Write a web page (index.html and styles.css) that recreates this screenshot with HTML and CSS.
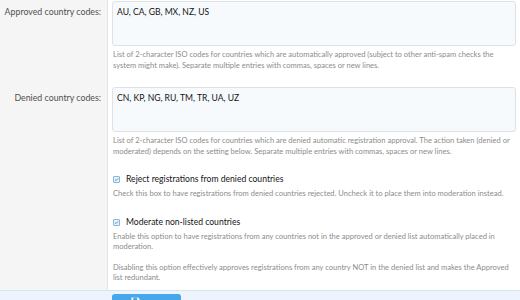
FILE: index.html
```html
<!DOCTYPE html>
<html lang="en">
<head>
  <meta charset="UTF-8" />
  <title>Registration options</title>
  <link rel="stylesheet" href="styles.css">
</head>
<body>

<form class="block">
  <dl class="form-row">
    <dt class="row-label">Approved country codes:</dt>
    <dd class="row-input">
      <textarea class="input-area" rows="3">AU, CA, GB, MX, NZ, US</textarea>
      <p class="explain">List of 2-character ISO codes for countries which are automatically approved (subject to other anti-spam checks the<br>system might make). Separate multiple entries with commas, spaces or new lines.</p>
    </dd>
  </dl>

  <dl class="form-row">
    <dt class="row-label">Denied country codes:</dt>
    <dd class="row-input">
      <textarea class="input-area" rows="3">CN, KP, NG, RU, TM, TR, UA, UZ</textarea>
      <p class="explain">List of 2-character ISO codes for countries which are denied automatic registration approval. The action taken (denied or<br>moderated) depends on the setting below. Separate multiple entries with commas, spaces or new lines.</p>
    </dd>
  </dl>

  <dl class="form-row">
    <dt class="row-label"></dt>
    <dd class="row-input checks">
      <label class="check">
        <span class="box">
          <svg width="7" height="7" viewBox="0 0 7 7"><path d="M1.3 3.6 L2.9 5.1 L5.8 1.9" fill="none" stroke="#2577b1" stroke-width="1"/></svg>
        </span>
        Reject registrations from denied countries
      </label>
      <p class="explain explain-check">Check this box to have registrations from denied countries rejected. Uncheck it to place them into moderation instead.</p>

      <label class="check check-gap">
        <span class="box">
          <svg width="7" height="7" viewBox="0 0 7 7"><path d="M1.3 3.6 L2.9 5.1 L5.8 1.9" fill="none" stroke="#2577b1" stroke-width="1"/></svg>
        </span>
        Moderate non-listed countries
      </label>
      <p class="explain explain-check">Enable this option to have registrations from any countries not in the approved or denied list automatically placed in<br>moderation.</p>
      <p class="explain explain-gap">Disabling this option effectively approves registrations from any country NOT in the denied list and makes the Approved<br>list redundant.</p>
    </dd>
  </dl>

  <div class="submit-row">
    <div class="submit-spacer"></div>
    <button type="submit" class="button">
      <svg width="9" height="10" viewBox="0 0 9 10"><path d="M0.5 0.5 H7 L8.5 2 V9.5 H0.5 Z" fill="#ffffff"/><rect x="2.2" y="0.5" width="4" height="2.5" fill="#47a7eb"/></svg>
      <span class="button-text">Save</span>
    </button>
  </div>
</form>

</body>
</html>
```

FILE: styles.css
```css
body {
  margin: 0;
  padding: 0;
  font-family: 'Lato', 'Open Sans', sans-serif;
  background: #ffffff;
  color: #141414;
  overflow: hidden;
}

.block {
  width: 520px;
}

.form-row {
  display: flex;
  margin: 0;
}

.row-label {
  width: 101px;
  flex-shrink: 0;
  padding: 5px 6px 0 0;
  background: #f5f5f5;
  border-right: 1px solid #e4e4e4;
  text-align: right;
  white-space: nowrap;
  font-size: 8.8px;
  line-height: 14px;
  color: #505050;
}

.row-input {
  flex: 1;
  margin: 0;
  padding: 1px 4px 15px 4px;
}

.input-area {
  display: block;
  box-sizing: border-box;
  width: 100%;
  height: 45px;
  padding: 3px 4px;
  font-family: inherit;
  font-size: 8.6px;
  line-height: 14px;
  color: #141414;
  background: #f7fafd;
  border: 1px solid #dfe2e5;
  border-radius: 3px;
  resize: none;
}

.explain {
  margin: 4px -8px 0 1px;
  font-size: 7.55px;
  line-height: 10.5px;
  color: #8c8c8c;
}

.checks {
  padding-top: 0;
  padding-bottom: 6px;
}

.check {
  display: flex;
  align-items: center;
  gap: 6px;
  font-size: 8.6px;
  line-height: 14px;
  color: #141414;
}

.check-gap {
  margin-top: 16px;
}

.box {
  display: flex;
  align-items: center;
  justify-content: center;
  box-sizing: border-box;
  width: 7px;
  height: 7px;
  border: 1px solid #86b8df;
  border-radius: 1px;
  background: #e8f2fb;
  margin-left: 1px;
}

.explain-check {
  margin-top: 2.5px;
}

.explain-gap {
  margin-top: 10px;
}

.submit-row {
  display: flex;
  background: #edf4fb;
  border-top: 1px solid #d8e4ef;
  padding: 3px 0 4px 0;
}

.submit-spacer {
  width: 112px;
  flex-shrink: 0;
}

.button {
  display: flex;
  align-items: flex-start;
  justify-content: center;
  gap: 4px;
  width: 69px;
  height: 30px;
  padding: 3px 0 0 0;
  background: #47a7eb;
  color: #ffffff;
  border: none;
  border-radius: 3px;
  font-family: inherit;
  font-size: 9px;
  line-height: 10px;
}

.button-text {
  margin-top: 6px;
}
```
